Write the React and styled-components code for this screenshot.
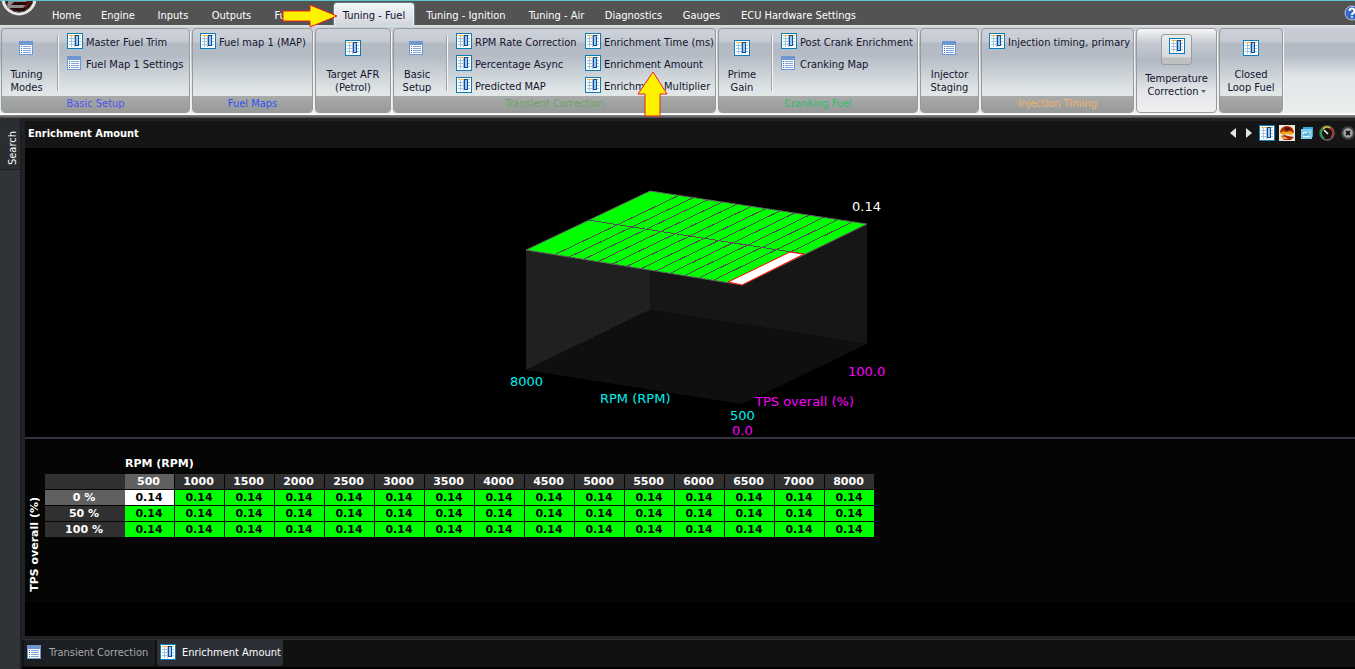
import styled, { createGlobalStyle, css } from 'styled-components';

const GlobalStyle = createGlobalStyle`
  * {
    box-sizing: border-box;
  }

  body {
    margin: 0;
    background: #000;
    font-family: 'DejaVu Sans Condensed', 'DejaVu Sans', sans-serif;
    font-size: 11px;
    line-height: 13px;
    overflow-x: hidden;
  }

  button {
    border: 0;
    padding: 0;
    background: none;
    color: inherit;
    font: inherit;
    cursor: pointer;
  }

  svg {
    display: block;
    flex: none;
  }
`;

const Page = styled.div`
  display: flex;
  flex-direction: column;
  min-height: 100vh;
  overflow: hidden;
`;

const MenuBar = styled.header`
  display: flex;
  align-items: flex-end;
  height: 25px;
  background: #535353;
  border-top: 1px solid #5cc5cb;
`;

const Logo = styled.div`
  width: 42px;
  height: 24px;
`;

const MenuTabs = styled.nav`
  display: flex;
  flex: 1;
  align-items: flex-end;
`;

const MenuTab = styled.button`
  position: relative;
  width: ${({ $width }) => $width}px;
  height: 22px;
  padding-top: 2px;
  color: #fff;
  white-space: nowrap;

  ${({ $active }) =>
    $active &&
    css`
      color: #101030;
      background: linear-gradient(#f3f6f7, #d2d5dc);
      border: 1px solid #e9fbfc;
      border-bottom: 0;
      border-radius: 3px 3px 0 0;
      box-shadow: 0 0 2px #9fdfe3;
    `}
`;

const HelpButton = styled.button`
  align-self: center;
  width: 11px;
`;

const Ribbon = styled.div`
  display: flex;
  gap: 2px;
  height: 90px;
  padding: 3px 1px 2px;
  background: linear-gradient(
    #e2e3e5 0,
    #c9cdd5 3px,
    #c5cad2 17px,
    #b4bbc5 18px,
    #b4bbc5 30px,
    #e0e6e8 52px,
    #eceeee 88px,
    #fff 89px
  );
`;

const RibbonEdge = styled.div`
  height: 3px;
  background: linear-gradient(#8b8d8d, #4a4c4c);
`;

const Group = styled.section`
  display: flex;
  flex-direction: column;
  width: ${({ $width }) => $width}px;
  flex: none;
  border: 1px solid #97999b;
  border-radius: 4px;
  box-shadow: 1px 1px 0 #f4f4f4;
  background: ${({ $highlight }) =>
    $highlight
      ? 'linear-gradient(#f6f6f7 0, #c6cbd3 14px, #b1b8c3 32px, #e4e6e9 62px, #efeff0 100%)'
      : 'linear-gradient(#ced1d9 0, #c5cad2 13px, #b4bbc5 14px, #b4bbc5 26px, #e0e6e6 62px, #e3e9e8 100%)'};
`;

const GroupBody = styled.div`
  display: flex;
  flex: 1;
  padding-top: 1px;
`;

const GroupLabel = styled.h2`
  height: 16px;
  margin: 0;
  color: ${({ $color }) => $color};
  background: linear-gradient(#a9abab, #989a9a);
  border-radius: 0 0 3px 3px;
  font-size: 11px;
  font-weight: normal;
  line-height: 16px;
  text-align: center;
`;

const LargeButton = styled.button`
  display: flex;
  flex-direction: column;
  align-items: center;
  gap: ${({ $framed }) => ($framed ? '7px' : '12px')};
  width: ${({ $width }) => ($width ? `${$width}px` : '100%')};
  padding-top: ${({ $framed }) => ($framed ? '4px' : '10px')};
  color: #14142e;
  white-space: nowrap;
`;

const IconFrame = styled.span`
  width: 31px;
  height: 31px;
  padding: 3px 7px;
  background: linear-gradient(#e9eaec 0, #d6d9dd 22px, #bfc1c1 23px);
  border: 1px solid #9b9d9f;
  border-radius: 3px;
`;

const Separator = styled.div`
  width: 2px;
  height: 56px;
  margin: 5px 8px 0 6px;
  border-left: 1px solid #9fa2a6;
  background: #f5f6f6;
`;

const ItemList = styled.div`
  display: grid;
  grid-auto-flow: column;
  grid-template-rows: repeat(3, 22px);
  grid-template-columns: ${({ $columns }) => $columns || 'auto'};
  padding-left: ${({ $inset }) => ($inset ? '7px' : '0')};
`;

const ItemButton = styled.button`
  position: relative;
  display: flex;
  align-items: center;
  gap: 3px;
  color: #14142e;
  white-space: nowrap;
`;

const ItemLabel = styled.span`
  padding-top: 2px;
`;

const PointerRight = styled.svg`
  position: absolute;
  z-index: 2;
  left: 20px;
  top: 1px;
`;

const PointerUp = styled.svg`
  position: absolute;
  z-index: 2;
  left: 52px;
  top: 19px;
`;

const Workspace = styled.main`
  display: flex;
  flex: 1;
`;

const Sidebar = styled.aside`
  width: 22px;
  background: #303439;
  border-right: 2px solid #1b1e22;
`;

const SearchTab = styled.button`
  width: 20px;
  height: 52px;
  padding: 0 6px 10px 1px;
  color: #fff;
  background: #2a2d32;
  border-top: 1px solid #1b1e22;
  writing-mode: vertical-rl;
  transform: rotate(180deg);
  text-align: center;
`;

const Main = styled.div`
  display: flex;
  flex: 1;
  flex-direction: column;
  min-width: 0;
`;

const Panel = styled.section`
  display: flex;
  flex: 1;
  flex-direction: column;
  border-top: 3px solid #222;
  border-left: 3px solid #222;
  border-bottom: 3px solid #222;
`;

const PanelHeader = styled.div`
  display: flex;
  align-items: center;
  justify-content: space-between;
  height: 27px;
  padding-left: 3px;
  padding-bottom: 3px;
  background: #151515;
`;

const PanelTitle = styled.h1`
  margin: 0;
  color: #fff;
  font-size: 11px;
`;

const PanelTools = styled.div`
  display: flex;
  align-items: center;
  gap: 4px;

  button {
    width: 16px;
    height: 16px;
  }

  button:nth-child(-n + 2) {
    width: 12px;
  }
`;

const ChartArea = styled.div`
  display: flex;
  justify-content: center;
  height: 291px;
  border-bottom: 2px solid #35333d;
  font-family: 'DejaVu Sans', sans-serif;
  font-size: 13px;
`;

const TableArea = styled.div`
  display: grid;
  grid-template-columns: 20px 1fr;
  align-content: start;
  height: 163px;
  padding-top: 17px;
  background: #050505;
  color: #fff;
  font-family: 'DejaVu Sans', sans-serif;
  font-weight: bold;
`;

const RpmTitle = styled.div`
  grid-column: 2;
  height: 18px;
  padding-left: 80px;
  line-height: 16px;
`;

const TpsTitle = styled.div`
  margin: 23px 0 0 3px;
  writing-mode: vertical-rl;
  transform: rotate(180deg);
  white-space: nowrap;
`;

const MapTable = styled.table`
  justify-self: start;
  align-self: start;
  width: 830px;
  table-layout: fixed;
  border-collapse: separate;
  border-spacing: 0;
  text-align: center;
`;

const HeadCell = styled.th`
  width: ${({ $wide }) => ($wide ? '80px' : '50px')};
  height: 16px;
  padding: 0 2px 0 0;
  line-height: 15px;
  background: ${({ $active }) => ($active ? '#606060' : '#303030')};
  border-right: ${({ $wide }) => ($wide ? '0' : '1px')} solid #050505;
  border-bottom: 1px solid #050505;
`;

const Cell = styled.td`
  height: 16px;
  padding: 0 1px 0 0;
  line-height: 15px;
  color: #000;
  background: ${({ $active }) => ($active ? '#fff' : '#0f0')};
  border-right: 1px solid #050505;
  border-bottom: 1px solid #050505;
`;

const BottomTabs = styled.footer`
  display: flex;
  gap: 2px;
  height: 30px;
  padding-left: 2px;
  background: #111;
  border-top: 1px solid #2e3238;
  border-bottom: 2px solid #000;
`;

const BottomTab = styled.button`
  display: flex;
  align-items: center;
  gap: 6px;
  height: 26px;
  width: ${({ $active }) => ($active ? '126px' : '131px')};
  padding: 0 0 2px 3px;
  color: ${({ $active }) => ($active ? '#fff' : '#a9a9a9')};
  background: ${({ $active }) => ($active ? '#2c3036' : '#1b1e22')};
  border-radius: 0 0 3px 3px;
  white-space: nowrap;
`;

const DropSvg = styled.svg`
  display: inline-block;
  margin-left: 2px;
  vertical-align: middle;
`;

function TableIcon() {
  return (
    <svg width="16" height="16" viewBox="0 0 16 16" aria-hidden="true">
      <rect width="16" height="16" fill="#0b7cb8" />
      <rect x="1" y="1" width="14" height="14" fill="#fff" />
      <path d="M2 2h6v1H2zM12 2h2v1h-2z" fill="#f7b848" />
      <path d="M2 5.500h6M2 8.500h6M2 11.500h6M4.500 3v11M7.500 3v11M12 5.500h2M12 8.500h2M12 11.500h2" stroke="#a3c4de" />
      <rect x="8.500" y="2.500" width="3" height="10" fill="#a5c8ee" stroke="#0c4da2" />
    </svg>
  );
}

function ListIcon() {
  return (
    <svg width="16" height="16" viewBox="0 0 16 16" aria-hidden="true">
      <rect width="14" height="14" y="1" fill="#6e97d2" />
      <rect x="1" y="5" width="12" height="9" fill="#fff" />
      <path d="M2 6.500h1M2 8.500h1M2 10.500h1M2 12.500h1" stroke="#3767b0" />
      <path d="M4 6.500h8M4 8.500h8M4 10.500h8M4 12.500h8" stroke="#83a6da" />
    </svg>
  );
}

function LogoMark() {
  return (
    <svg width="41" height="24" viewBox="0 1 41 24" aria-hidden="true">
      <circle cx="19" cy="-2" r="16" fill="#2b0507" stroke="#e8e8e8" strokeWidth="3" />
      <circle cx="19" cy="-2" r="14" fill="none" stroke="#555" />
      <path d="M8 0h20l-2 2H14l-3 3h15l-3 3H7z" fill="#8b8b8b" />
      <path d="M30 1l-5 7" stroke="#7b1518" strokeWidth="2" />
    </svg>
  );
}

function HelpIcon() {
  return (
    <svg width="16" height="16" viewBox="0 0 16 16" aria-hidden="true">
      <circle cx="8" cy="8" r="7" fill="#3566cc" stroke="#c3cbe0" />
      <path d="M5.500 6a2.500 2.500 0 1 1 3.500 2.200c-.7.400-1 .8-1 1.800" fill="none" stroke="#fff" strokeWidth="2" />
      <circle cx="8" cy="12" r="1" fill="#fff" />
    </svg>
  );
}

function ArrowIcon({ back }) {
  return (
    <svg width="12" height="16" viewBox="0 0 12 16" aria-hidden="true">
      <path d={back ? 'M9 3v10L3 8z' : 'M3 3v10l6-5z'} fill="#e4e4e4" />
    </svg>
  );
}

function SurfaceIcon() {
  return (
    <svg width="16" height="16" viewBox="0 0 16 16" aria-hidden="true">
      <rect width="16" height="16" fill="#e9e6e0" />
      <path d="M1 8c0-4 3-7 7-7s7 3 7 7l-3-1-4 2-4-2z" fill="#a82c06" />
      <path d="M5 3c2-1 5-1 7 1l-4 2z" fill="#5e1403" />
      <path d="M1 8l3-2 3 1 4-1 4 2-3 2-4-1-4 1z" fill="#f3a51c" />
      <path d="M2 11l4-1 3 1 6 1-3 3H5z" fill="#a82808" />
      <path d="M2 11l4 1 3 2H5z" fill="#f0c040" />
    </svg>
  );
}

function WindowsIcon() {
  return (
    <svg width="16" height="16" viewBox="0 0 16 16" aria-hidden="true">
      <path d="M4 2h10v10H4z" fill="#3ba9da" />
      <path d="M2 4h11v10H2z" fill="#7dcdf0" />
      <path d="M4 7h7v5H4z" fill="#e9f8ff" />
      <path d="M5 11V9h2v2M8 11V8h2v3" fill="none" stroke="#2384bd" />
    </svg>
  );
}

function GaugeIcon() {
  return (
    <svg width="16" height="16" viewBox="0 0 16 16" aria-hidden="true">
      <circle cx="8" cy="8" r="7" fill="#151515" stroke="#666" strokeWidth="1.500" />
      <path d="M5 13a5.500 5.500 0 0 1-1-9" fill="none" stroke="#18b548" strokeWidth="1.500" />
      <path d="M4 4a5.500 5.500 0 0 1 7-1" fill="none" stroke="#d8c52a" strokeWidth="1.500" />
      <path d="M11 3a5.500 5.500 0 0 1 1 9" fill="none" stroke="#d8221c" strokeWidth="1.500" />
      <path d="M9 9L5 5" stroke="#fff" strokeWidth="1.500" />
    </svg>
  );
}

function CloseIcon() {
  return (
    <svg width="16" height="16" viewBox="0 0 16 16" aria-hidden="true">
      <circle cx="9" cy="8" r="6" fill="#8d8d8d" stroke="#3d3d3d" strokeWidth="2" />
      <circle cx="9" cy="8" r="4" fill="#aaa" />
      <path d="M7 6l4 4M11 6l-4 4" stroke="#151515" strokeWidth="2" />
    </svg>
  );
}

const icons = { table: TableIcon, list: ListIcon };

const menu = [
  { label: 'Home', width: 49 },
  { label: 'Engine', width: 54 },
  { label: 'Inputs', width: 56 },
  { label: 'Outputs', width: 61 },
  { label: 'Functions', width: 72, pointer: true },
  { label: 'Tuning - Fuel', width: 80, active: true },
  { label: 'Tuning - Ignition', width: 104 },
  { label: 'Tuning - Air', width: 77 },
  { label: 'Diagnostics', width: 77 },
  { label: 'Gauges', width: 59 },
  { label: 'ECU Hardware Settings', width: 135 },
];

const groups = [
  {
    label: 'Basic Setup',
    color: '#4f55ee',
    width: 189,
    large: { lines: ['Tuning', 'Modes'], icon: 'list', width: 49 },
    items: [
      { label: 'Master Fuel Trim', icon: 'table' },
      { label: 'Fuel Map 1 Settings', icon: 'list' },
    ],
  },
  {
    label: 'Fuel Maps',
    color: '#2f55ee',
    width: 121,
    items: [{ label: 'Fuel map 1 (MAP)', icon: 'table' }],
  },
  {
    width: 76,
    large: { lines: ['Target AFR', '(Petrol)'], icon: 'table' },
  },
  {
    label: 'Transient Correction',
    color: '#6aa561',
    width: 323,
    columns: '129px auto',
    large: { lines: ['Basic', 'Setup'], icon: 'list', width: 46 },
    items: [
      { label: 'RPM Rate Correction', icon: 'table' },
      { label: 'Percentage Async', icon: 'table' },
      { label: 'Predicted MAP', icon: 'table' },
      { label: 'Enrichment Time (ms)', icon: 'table' },
      { label: 'Enrichment Amount', icon: 'table', pointer: true },
      { label: 'Enrichment Multiplier', icon: 'table' },
    ],
  },
  {
    label: 'Cranking Fuel',
    color: '#2dc065',
    width: 200,
    large: { lines: ['Prime', 'Gain'], icon: 'table', width: 46 },
    items: [
      { label: 'Post Crank Enrichment', icon: 'table' },
      { label: 'Cranking Map', icon: 'list' },
    ],
  },
  {
    width: 59,
    large: { lines: ['Injector', 'Staging'], icon: 'list' },
  },
  {
    label: 'Injection Timing',
    color: '#f2b268',
    width: 153,
    items: [{ label: 'Injection timing, primary', icon: 'table' }],
  },
  {
    width: 81,
    highlight: true,
    large: { lines: ['Temperature', 'Correction'], icon: 'table', dropdown: true },
  },
  {
    width: 64,
    large: { lines: ['Closed', 'Loop Fuel'], icon: 'table' },
  },
];

const rpmValues = [
  500, 1000, 1500, 2000, 2500, 3000, 3500, 4000, 4500, 5000, 5500, 6000, 6500,
  7000, 8000,
];
const tpsValues = [0, 50, 100];

function DropMark() {
  return (
    <DropSvg width="5" height="4" viewBox="0 0 5 4" aria-hidden="true">
      <path d="M0 0h5L2.500 3z" fill="#666" />
    </DropSvg>
  );
}

function LargeItem({ large }) {
  const Icon = icons[large.icon];
  const [first, second] = large.lines;

  return (
    <LargeButton type="button" $width={large.width} $framed={large.dropdown}>
      {large.dropdown ? (
        <IconFrame>
          <Icon />
        </IconFrame>
      ) : (
        <Icon />
      )}
      <span>
        {first}
        <br />
        {second}
        {large.dropdown && <DropMark />}
      </span>
    </LargeButton>
  );
}

function SmallItem({ item }) {
  const Icon = icons[item.icon];

  return (
    <ItemButton type="button">
      <Icon />
      <ItemLabel>{item.label}</ItemLabel>
      {item.pointer && (
        <PointerUp width="32" height="46" viewBox="0 0 32 46" aria-hidden="true">
          <path d="M16 1l14 22h-7v22H8V23H1z" fill="#fff200" stroke="#ed1c24" />
        </PointerUp>
      )}
    </ItemButton>
  );
}

function RibbonGroup({ group }) {
  const { label, color, width, large, items, columns, highlight } = group;

  return (
    <Group $width={width} $highlight={highlight}>
      <GroupBody>
        {large && <LargeItem large={large} />}
        {large && items && <Separator />}
        {items && (
          <ItemList $columns={columns} $inset={!large}>
            {items.map((item) => (
              <SmallItem key={item.label} item={item} />
            ))}
          </ItemList>
        )}
      </GroupBody>
      {!highlight && <GroupLabel $color={color}>{label}</GroupLabel>}
    </Group>
  );
}

function SurfaceChart() {
  // 7500 rpm is not a breakpoint, so the first cell spans two steps of fifteen
  const steps = Array.from({ length: 13 }, (_, i) => (i + 2) / 15);

  return (
    <svg width="400" height="289" viewBox="490 148 400 289" role="img" aria-label="Enrichment Amount surface">
      <path d="M526 250L650 191V310L526 370z" fill="#202020" />
      <path d="M650 191L867 224V344L650 310z" fill="#161616" />
      <path d="M650 310L867 344L742 404L526 370z" fill="#0f0f0f" />
      <path d="M526 250L650 191L867 224L742 285z" fill="#0f0" stroke="#606060" />
      <g stroke="#505050" shapeRendering="crispEdges">
        {steps.map((t) => (
          <line key={t} x1={526 + 216 * t} y1={250 + 35 * t} x2={650 + 217 * t} y2={191 + 33 * t} />
        ))}
        <line x1="588" y1="220" x2="804" y2="254" />
      </g>
      <path d="M728 282L790 252L804 254L742 285z" fill="#fff" stroke="#f00" />
      <g fill="#fff">
        <text x="852" y="211">0.14</text>
      </g>
      <g fill="#00f0f0">
        <text x="510" y="386">8000</text>
        <text x="600" y="403">RPM (RPM)</text>
        <text x="730" y="420">500</text>
      </g>
      <g fill="#f0f">
        <text x="848" y="376">100.0</text>
        <text x="755" y="406">TPS overall (%)</text>
        <text x="732" y="435">0.0</text>
      </g>
    </svg>
  );
}

function FuelTable() {
  return (
    <MapTable>
      <thead>
        <tr>
          <HeadCell as="td" $wide />
          {rpmValues.map((rpm, col) => (
            <HeadCell key={rpm} scope="col" $active={col === 0}>
              {rpm}
            </HeadCell>
          ))}
        </tr>
      </thead>
      <tbody>
        {tpsValues.map((tps, row) => (
          <tr key={tps}>
            <HeadCell scope="row" $wide $active={row === 0}>
              {`${tps} %`}
            </HeadCell>
            {rpmValues.map((rpm, col) => (
              <Cell key={rpm} $active={row === 0 && col === 0}>
                0.14
              </Cell>
            ))}
          </tr>
        ))}
      </tbody>
    </MapTable>
  );
}

function App() {
  return (
    <Page>
      <GlobalStyle />
      <MenuBar>
        <Logo>
          <LogoMark />
        </Logo>
        <MenuTabs>
          {menu.map(({ label, width, active, pointer }) => (
            <MenuTab key={label} type="button" $width={width} $active={active}>
              {label}
              {pointer && (
                <PointerRight width="56" height="24" viewBox="0 0 56 24" aria-hidden="true">
                  <path d="M1 7h27V1l27 11-27 11v-6H1z" fill="#fff200" stroke="#ed1c24" />
                </PointerRight>
              )}
            </MenuTab>
          ))}
        </MenuTabs>
        <HelpButton type="button" aria-label="Help">
          <HelpIcon />
        </HelpButton>
      </MenuBar>
      <Ribbon>
        {groups.map((group, i) => (
          <RibbonGroup key={i} group={group} />
        ))}
      </Ribbon>
      <RibbonEdge />
      <Workspace>
        <Sidebar>
          <SearchTab type="button">Search</SearchTab>
        </Sidebar>
        <Main>
          <Panel>
            <PanelHeader>
              <PanelTitle>Enrichment Amount</PanelTitle>
              <PanelTools>
                <button type="button" aria-label="Previous"><ArrowIcon back /></button>
                <button type="button" aria-label="Next"><ArrowIcon /></button>
                <button type="button" aria-label="Table view"><TableIcon /></button>
                <button type="button" aria-label="Surface view"><SurfaceIcon /></button>
                <button type="button" aria-label="Windows"><WindowsIcon /></button>
                <button type="button" aria-label="Gauge"><GaugeIcon /></button>
                <button type="button" aria-label="Close"><CloseIcon /></button>
              </PanelTools>
            </PanelHeader>
            <ChartArea>
              <SurfaceChart />
            </ChartArea>
            <TableArea>
              <RpmTitle>RPM (RPM)</RpmTitle>
              <TpsTitle>TPS overall (%)</TpsTitle>
              <FuelTable />
            </TableArea>
          </Panel>
          <BottomTabs>
            <BottomTab type="button">
              <ListIcon />
              Transient Correction
            </BottomTab>
            <BottomTab type="button" $active>
              <TableIcon />
              Enrichment Amount
            </BottomTab>
          </BottomTabs>
        </Main>
      </Workspace>
    </Page>
  );
}

export default App;
